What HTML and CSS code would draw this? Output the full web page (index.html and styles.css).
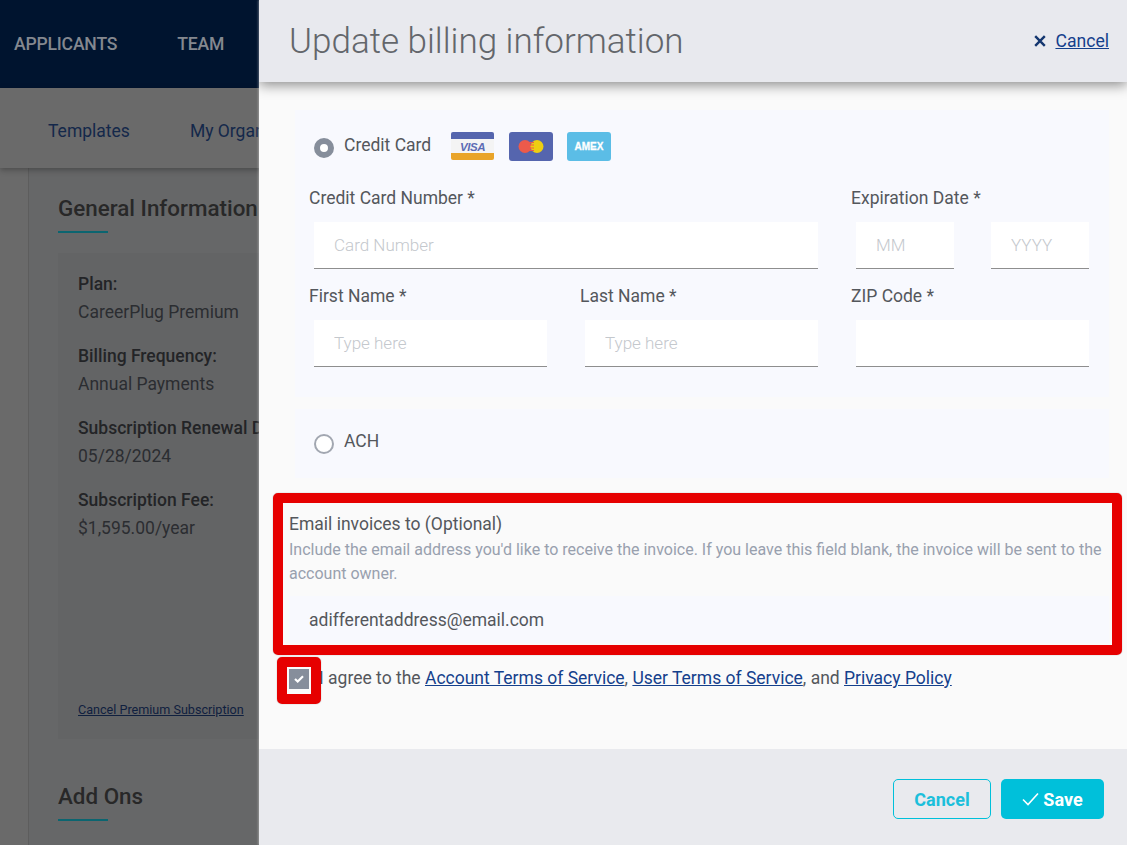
FILE: index.html
```html
<!DOCTYPE html>
<html>
  <head>
    <title>Update billing information</title>
    <link rel="stylesheet" href="styles.css">
  </head>
  <body>
    <div class="page">
      <div class="topnav">
        <a class="topnav-link">APPLICANTS</a>
        <a class="topnav-link">TEAM</a>
      </div>
      <div class="subnav">
        <a class="subnav-link">Templates</a>
        <a class="subnav-link">My Organization</a>
      </div>
      <div class="content">
        <div class="rail"></div>
        <div class="main">
          <h2 class="section-title">General Information</h2>
          <div class="plan-card">
            <div class="plan-item">
              <div class="plan-label">Plan:</div>
              <div>CareerPlug Premium</div>
            </div>
            <div class="plan-item">
              <div class="plan-label">Billing Frequency:</div>
              <div>Annual Payments</div>
            </div>
            <div class="plan-item">
              <div class="plan-label">Subscription Renewal Date:</div>
              <div>05/28/2024</div>
            </div>
            <div class="plan-item">
              <div class="plan-label">Subscription Fee:</div>
              <div>$1,595.00/year</div>
            </div>
            <a class="plan-cancel">Cancel Premium Subscription</a>
          </div>
          <h2 class="section-title">Add Ons</h2>
        </div>
      </div>
    </div>

    <div class="drawer">
      <div class="drawer-header">
        <h1>Update billing information</h1>
        <a class="header-cancel">
          <svg width="12" height="12" viewBox="0 0 12 12">
            <path d="M1.200 1.200l9.600 9.600M10.800 1.200l-9.600 9.600" stroke="#14366f" stroke-width="2.400" fill="none"/>
          </svg>
          <span>Cancel</span>
        </a>
      </div>

      <div class="drawer-body">
        <div class="pay-box pay-card">
          <div class="pay-option">
            <span class="radio radio-on"></span>
            <span class="pay-name">Credit Card</span>
            <svg class="card-icon" width="44" height="28" viewBox="0 0 44 28">
              <rect width="43" height="28" rx="2" fill="#f4f4f4"/>
              <path d="M0 7V2a2 2 0 0 1 2-2h39a2 2 0 0 1 2 2v5z" fill="#5565ae"/>
              <path d="M0 21V26a2 2 0 0 0 2 2h39a2 2 0 0 0 2-2v-5z" fill="#e9a429"/>
              <text x="21.500" y="18.500" class="visa-text">VISA</text>
            </svg>
            <svg class="card-icon" width="44" height="29" viewBox="0 0 44 29">
              <rect width="44" height="29" rx="3" fill="#5565ae"/>
              <circle cx="16" cy="14.500" r="6.500" fill="#ec5a4b"/>
              <circle cx="28" cy="14.500" r="6.500" fill="#edcf12"/>
              <path d="M20 10.500h5M20 13h5M20 16h5M20 18.500h5" stroke="#ec5a4b" stroke-width="1"/>
            </svg>
            <svg class="card-icon" width="44" height="29" viewBox="0 0 44 29">
              <rect width="44" height="29" rx="3" fill="#5bbde6"/>
              <text x="22" y="18" class="amex-text">AMEX</text>
            </svg>
          </div>

          <div class="card-fields">
            <div class="field field-wide">
              <label>Credit Card Number *</label>
              <input class="text-input" placeholder="Card Number">
            </div>
            <div class="field">
              <label>Expiration Date *</label>
              <div class="expiry">
                <input class="text-input" placeholder="MM">
                <input class="text-input" placeholder="YYYY">
              </div>
            </div>
            <div class="field">
              <label>First Name *</label>
              <input class="text-input" placeholder="Type here">
            </div>
            <div class="field">
              <label>Last Name *</label>
              <input class="text-input" placeholder="Type here">
            </div>
            <div class="field">
              <label>ZIP Code *</label>
              <input class="text-input">
            </div>
          </div>
        </div>

        <div class="pay-box pay-ach">
          <div class="pay-option">
            <span class="radio"></span>
            <span class="pay-name">ACH</span>
          </div>
        </div>

        <div class="email-block">
          <div class="email-label">Email invoices to (Optional)</div>
          <div class="email-help">
            Include the email address you'd like to receive the invoice. If you leave this field blank, the invoice will be sent to the account owner.
          </div>
          <input class="email-input" value="adifferentaddress@email.com">
        </div>

        <div class="agree">
          <span class="checkbox">
            <svg width="10" height="8" viewBox="0 0 10 8">
              <path d="M1 4l2.700 2.500L9 1.300" stroke="#fff" stroke-width="2.200" fill="none"/>
            </svg>
          </span>
          <span class="agree-text">I agree to the <a>Account Terms of Service</a>, <a>User Terms of Service</a>, and <a>Privacy Policy</a></span>
        </div>

        <div class="highlight highlight-email"></div>
        <div class="highlight highlight-check"></div>
      </div>

      <div class="drawer-footer">
        <button class="btn btn-outline">Cancel</button>
        <button class="btn btn-solid">
          <svg width="17" height="14" viewBox="0 0 17 14">
            <path d="M1 7.500l5 5L16 1.500" stroke="#fff" stroke-width="1.600" fill="none"/>
          </svg>
          Save
        </button>
      </div>
    </div>
  </body>
</html>
```

FILE: styles.css
```css
* {
  box-sizing: border-box;
}

body {
  font-family: Roboto, sans-serif;
  margin: 0;
  height: 845px;
  overflow: hidden;
  background: #666768;
  color: #26282b;
}

.page {
  height: 845px;
  display: flex;
  flex-direction: column;
}

.topnav {
  height: 88px;
  background: #00142f;
  display: flex;
  align-items: center;
  gap: 60px;
  padding: 0 0 1px 14px;
  flex-shrink: 0;
}

.topnav-link {
  color: #84888f;
  font-size: 17.6px;
  font-weight: 500;
  letter-spacing: -0.2px;
}

.subnav {
  height: 80px;
  background: #6a6a6a;
  display: flex;
  align-items: center;
  gap: 60px;
  padding: 6px 0 0 48px;
  box-shadow: 0 2px 6px rgba(0, 0, 0, 0.3);
  flex-shrink: 0;
  white-space: nowrap;
  position: relative;
}

.subnav-link {
  color: #14284a;
  font-size: 17.5px;
}

.content {
  flex: 1;
  display: flex;
}

.rail {
  width: 29px;
  background: #6a6a6a;
  border-right: 1px solid #5d5d5d;
  flex-shrink: 0;
}

.main {
  padding: 26px 0 0 29px;
  flex: 1;
  white-space: nowrap;
}

.section-title {
  font-size: 22.4px;
  font-weight: 500;
  line-height: 28px;
  color: #282828;
  margin: 0;
  padding-bottom: 9px;
  position: relative;
}

.section-title::after {
  content: '';
  display: block;
  width: 50px;
  height: 2px;
  margin-top: 9px;
  background: #0b6570;
}

.plan-card {
  background: #636465;
  margin-top: 11px;
  height: 486px;
  padding: 17px 0 0 20px;
  font-size: 17.5px;
  line-height: 28px;
  color: #2b2d31;
  position: relative;
  display: flex;
  flex-direction: column;
  margin-bottom: 43px;
}

.plan-item {
  margin-bottom: 16px;
}

.plan-label {
  font-weight: 500;
  color: #232427;
}

.plan-cancel {
  margin-top: auto;
  margin-bottom: 21px;
  font-size: 12.6px;
  line-height: 16px;
  color: #10203f;
  text-decoration: underline;
}

/* drawer over the page */
.drawer {
  position: absolute;
  top: 0;
  left: 259px;
  width: 868px;
  height: 845px;
  background: #fafafa;
  display: flex;
  flex-direction: column;
  box-shadow: -1px 0 2px rgba(255, 255, 255, 0.3);
  overflow: hidden;
}

.drawer-header {
  height: 82px;
  background: #e8e9ee;
  display: flex;
  align-items: center;
  justify-content: space-between;
  padding: 0 18px 0 30px;
  box-shadow: 0 3px 12px rgba(0, 0, 0, 0.45);
  flex-shrink: 0;
  position: relative;
}

.drawer-header h1 {
  font-size: 35px;
  font-weight: 300;
  color: #63666b;
  margin: 0;
}

.header-cancel {
  display: flex;
  align-items: center;
  gap: 9px;
  font-size: 17.6px;
  color: #14408c;
  margin-bottom: 1px;
}

.header-cancel span {
  text-decoration: underline;
}

.drawer-body {
  flex: 1;
  padding: 28px 18px 0 30px;
  position: relative;
}

.pay-box {
  background: #f8f9fe;
  margin-left: 6px;
}

.pay-card {
  height: 287px;
  padding: 22px 20px 0 14px;
}

.pay-ach {
  margin-top: 12px;
  height: 69px;
  padding: 19px 20px 0 14px;
}

.pay-option {
  display: flex;
  align-items: center;
  height: 28px;
  margin-left: 5px;
}

.radio {
  width: 20px;
  height: 20px;
  border-radius: 50%;
  border: 2px solid #a2a7b1;
  background: #fff;
  margin-top: 3px;
  flex-shrink: 0;
}

.radio-on {
  border: 6px solid #868e9b;
}

.pay-name {
  font-size: 17.5px;
  color: #54575c;
  margin: 0 20px 2px 10px;
}

.card-icon {
  margin-right: 14px;
}

.visa-text {
  font-family: "Liberation Sans", sans-serif;
  font-size: 11.5px;
  font-weight: 700;
  font-style: italic;
  letter-spacing: -0.4px;
  fill: #5c6cb4;
  text-anchor: middle;
}

.amex-text {
  font-family: "Liberation Sans", sans-serif;
  font-size: 10px;
  font-weight: 700;
  fill: #fff;
  stroke: #fff;
  stroke-width: 0.3px;
  text-anchor: middle;
}

.card-fields {
  display: grid;
  grid-template-columns: 271px 271px 233px;
  row-gap: 16px;
  margin-top: 27px;
}

.field {
  min-width: 0;
}

.field-wide {
  grid-column: span 2;
}

.field label {
  display: block;
  font-size: 17.5px;
  line-height: 22px;
  color: #54575c;
  margin: 0 0 13px 0;
}

.text-input {
  display: block;
  width: 233px;
  height: 47px;
  margin-left: 5px;
  padding: 0 20px;
  border: none;
  border-bottom: 1px solid #8e8e8e;
  background: #fff;
  font-family: Roboto, sans-serif;
  font-size: 17px;
  font-weight: 300;
  outline: none;
}

.field-wide .text-input {
  width: 504px;
}

.text-input::placeholder {
  color: #c4c8cd;
}

.expiry {
  display: flex;
  gap: 37px;
  width: 238px;
}

.expiry .text-input {
  width: 98px;
  min-width: 0;
}

.expiry .text-input + .text-input {
  margin-left: 0;
}

.email-block {
  margin-top: 34px;
}

.email-label {
  font-size: 17.5px;
  line-height: 24px;
  color: #54575c;
}

.email-help {
  font-size: 16px;
  line-height: 24px;
  color: #98a0ae;
  margin-top: 1px;
  padding-top: 1px;
}

.email-input {
  display: block;
  width: 820px;
  height: 47px;
  margin-top: 10px;
  padding: 0 20px;
  border: none;
  background: #f8f9fe;
  font-family: Roboto, sans-serif;
  font-size: 17.5px;
  color: #54575c;
  outline: none;
}

.agree {
  display: flex;
  align-items: center;
  margin-top: 24px;
}

.checkbox {
  width: 20px;
  height: 20px;
  background: #868e9b;
  display: flex;
  align-items: center;
  justify-content: center;
  flex-shrink: 0;
  margin-top: 2px;
}

.agree-text {
  font-size: 17.5px;
  color: #54575c;
  margin-left: 10px;
}

.agree-text a {
  color: #14408c;
  text-decoration: underline;
}

/* red annotation boxes */
.highlight {
  position: absolute;
  border: 10px solid #e60000;
  border-radius: 5px;
  box-shadow: 0 0 1px rgba(0, 0, 0, 0.5);
}

.highlight-email {
  top: 411px;
  left: 14px;
  width: 849px;
  height: 162px;
}

.highlight-check {
  top: 575px;
  left: 18px;
  width: 44px;
  height: 47px;
}

.drawer-footer {
  height: 96px;
  background: #e9eaee;
  display: flex;
  justify-content: flex-end;
  gap: 10px;
  padding: 30px 23px 0 0;
  flex-shrink: 0;
}

.btn {
  height: 40px;
  border-radius: 5px;
  font-family: Roboto, sans-serif;
  font-size: 18px;
  font-weight: 700;
  display: flex;
  align-items: center;
  justify-content: center;
  gap: 4px;
  cursor: pointer;
}

.btn-outline {
  width: 98px;
  background: transparent;
  border: 1px solid #00c0da;
  color: #1cbfdb;
}

.btn-solid {
  width: 103px;
  background: #00c0da;
  border: none;
  color: #fff;
}
```
